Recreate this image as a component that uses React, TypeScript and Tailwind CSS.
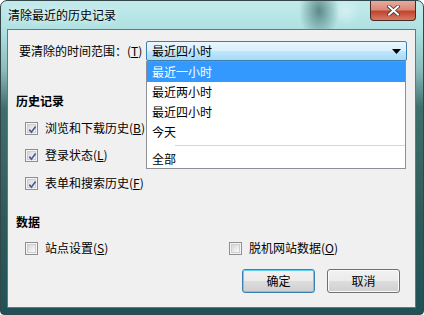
import React from 'react';

const CheckBox: React.FC<{checked?: boolean}> = ({checked}) => (
  <span className="relative flex w-[13px] h-[13px] shrink-0 border border-[#8e8f8f] bg-[#f4f4f4] p-[1px]">
    <span className="flex-1 border border-[#cfcfcf] bg-[linear-gradient(135deg,#d6d6d6,#fbfbfb)]"/>
    {checked && (
      <svg className="absolute left-[1px] top-[1px]" width="11" height="11" viewBox="0 0 11 11">
        <path d="M2.3 5.6 L4.4 8.2 L8.6 2.4" stroke="#4b5d94" strokeWidth="1.7" fill="none"/>
      </svg>
    )}
  </span>
);

// 选项行：文字 + 带下划线的快捷键
const Option: React.FC<{text: string; hot: string; checked?: boolean; className?: string}> = ({text, hot, checked, className}) => (
  <div className={`flex items-center h-[16px] gap-[7px] ${className ?? ''}`}>
    <CheckBox checked={checked}/>
    <span className="whitespace-nowrap">{text}(<u>{hot}</u>)</span>
  </div>
);

const Button: React.FC<{label: string; primary?: boolean}> = ({label, primary}) => (
  <div
    className={`flex items-center justify-center w-[73px] h-[24px] rounded-[3px] border ${primary ? 'border-[#3c7fb1] shadow-[inset_0_0_0_1px_#5fd0f5]' : 'border-[#707070] shadow-[inset_0_0_0_1px_#fbfbfb]'} bg-[linear-gradient(to_bottom,#f2f2f2_0%,#ebebeb_48%,#dddddd_52%,#cfcfcf_100%)]`}
  >
    {label}
  </div>
);

const items = ['最近一小时', '最近两小时', '最近四小时', '今天'];

export default function App() {
  return (
    <div className="w-[424px] h-[315px] overflow-hidden font-['Noto_Sans_CJK_SC','Microsoft_YaHei',sans-serif] text-[12px] leading-[16px] text-black">
      <div className="w-full h-full flex flex-col rounded-t-[7px] rounded-b-[4px] border border-[#33474b] bg-[linear-gradient(to_bottom,#c3eaeb_0%,#ade0e1_10%,#8bbcbc_22%,#3f6f6c_34%,#2d5b5a_70%,#1f5156_100%)]">
        {/* 标题栏 */}
        <div className="flex justify-between h-[28px] bg-[radial-gradient(ellipse_20px_30px_at_318px_10px,#5c8a8a,transparent),radial-gradient(circle_at_345px_10px,#d4f0ef_0,transparent_14px)]">
          <div className="pl-[7px] pt-[6px] whitespace-nowrap [text-shadow:0_0_6px_#ffffff]">清除最近的历史记录</div>
          <div className="mr-[7px] w-[46px] h-[20px] flex items-center justify-center rounded-b-[4px] border border-t-0 border-[#4a2a28] bg-[linear-gradient(to_bottom,#e9a99b_0%,#d98a79_45%,#c2452f_55%,#d67b63_100%)]">
            <svg width="13" height="11" viewBox="0 0 13 11">
              <path d="M2 1.5 L11 9.5 M11 1.5 L2 9.5" stroke="#3a3a3a" strokeWidth="3.6" strokeLinecap="square"/>
              <path d="M2 1.5 L11 9.5 M11 1.5 L2 9.5" stroke="#ffffff" strokeWidth="2" strokeLinecap="square"/>
            </svg>
          </div>
        </div>

        {/* 客户区 */}
        <div className="flex-1 ml-[6px] mr-[7px] mb-[6px] flex flex-col border border-[#5f7a7c] bg-[#f0f0f0]">
          <div className="flex items-center mt-[11px] pl-[11px]">
            <span className="w-[127px] whitespace-nowrap">要清除的时间范围：(<u>T</u>)</span>
            <div className="relative flex items-center w-[261px] h-[20px] pl-[5px] rounded-[2px] border border-[#3c7fb1] bg-[linear-gradient(to_bottom,#eaf6fd_0%,#d9f0fc_48%,#bee6fd_52%,#a7d9f5_100%)]">
              <span>最近四小时</span>
              <svg className="ml-auto mr-[5px]" width="9" height="5" viewBox="0 0 9 5">
                <path d="M0 0 H9 L4.5 5 Z" fill="#000"/>
              </svg>
              {/* 下拉列表 */}
              <div className="absolute left-[-1px] top-[19px] z-10 w-[260px] flex flex-col border border-[#8c9096] bg-white">
                {items.map((t, i) => (
                  <div
                    key={t}
                    className={`flex items-center h-[20px] pl-[5px] ${i === 0 ? 'bg-[#3399ff] text-white' : ''}`}
                  >
                    {t}
                  </div>
                ))}
                <div className="h-[1px] ml-[28px] my-[3px] bg-[#d7d7d7]"/>
                <div className="flex items-center h-[19px] pl-[5px]">全部</div>
              </div>
            </div>
          </div>

          <div className="mt-[32px] pl-[8px] font-bold">历史记录</div>
          <div className="flex flex-col pl-[17px]">
            <Option text="浏览和下载历史" hot="B" checked className="mt-[11px]"/>
            <Option text="登录状态" hot="L" checked className="mt-[11px]"/>
            <Option text="表单和搜索历史" hot="F" checked className="mt-[12px]"/>
          </div>

          <div className="mt-[23px] pl-[8px] font-bold">数据</div>
          <div className="flex mt-[10px] pl-[17px]">
            <Option text="站点设置" hot="S" className="w-[204px]"/>
            <Option text="脱机网站数据" hot="O"/>
          </div>

          <div className="flex justify-end gap-[12px] mt-[13px] pr-[15px]">
            <Button label="确定" primary/>
            <Button label="取消"/>
          </div>
        </div>
      </div>
    </div>
  );
}
